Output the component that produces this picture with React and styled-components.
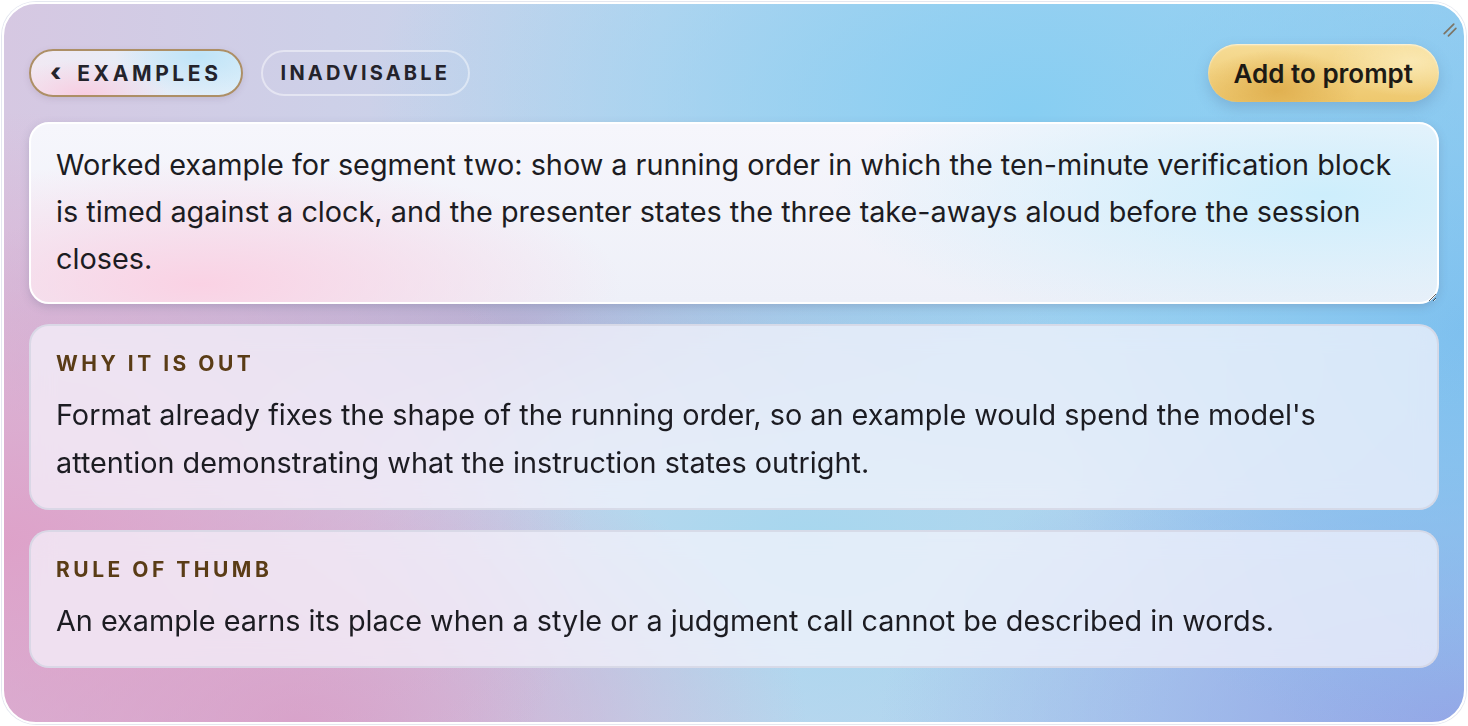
import React, { useState } from "react";
import styled, { createGlobalStyle } from "styled-components";

const GlobalStyle = createGlobalStyle`
  html, body {
    margin: 0;
    padding: 0;
    background: #fff;
  }
  body {
    font-family: Inter, "Noto Sans", "Liberation Sans", sans-serif;
    color: #1c1c22;
  }
  #root {
    padding: 2px;
    box-sizing: border-box;
    height: 726px;
  }
`;

const Panel = styled.div`
  position: relative;
  box-sizing: border-box;
  height: 100%;
  border: 2px solid #fff;
  border-radius: 34px;
  padding: 40px 25px 0 25px;
  display: flex;
  flex-direction: column;
  gap: 20px;
  overflow: hidden;
  box-shadow: 0 0 0 1px rgba(210, 215, 230, 0.6);
  background:
    radial-gradient(ellipse 40% 60% at 0% 75%, rgba(222, 160, 200, 0.95), rgba(222, 160, 200, 0) 100%),
    radial-gradient(ellipse 35% 40% at 20% 100%, rgba(214, 160, 200, 0.9), rgba(214, 160, 200, 0) 100%),
    radial-gradient(ellipse 45% 55% at 70% 15%, rgba(135, 206, 242, 1), rgba(135, 206, 242, 0) 100%),
    radial-gradient(ellipse 30% 60% at 100% 45%, rgba(125, 190, 238, 1), rgba(125, 190, 238, 0) 100%),
    radial-gradient(ellipse 40% 45% at 100% 100%, rgba(150, 165, 230, 1), rgba(150, 165, 230, 0) 100%),
    radial-gradient(ellipse 30% 40% at 55% 75%, rgba(165, 215, 238, 0.9), rgba(165, 215, 238, 0) 100%),
    radial-gradient(ellipse 40% 25% at 35% 44%, rgba(180, 160, 200, 0.7), rgba(180, 160, 200, 0) 100%),
    linear-gradient(90deg, #d6c8e2 0%, #c4d8ee 45%, #9fd0f0 100%);
`;

const Grip = styled.svg`
  position: absolute;
  top: 18px;
  right: 6px;
  width: 17px;
  height: 17px;
`;

const Header = styled.div`
  display: flex;
  align-items: center;
  gap: 18px;
  height: 58px;
`;

const Pill = styled.button`
  display: flex;
  align-items: center;
  gap: 16px;
  height: ${({ $active }) => ($active ? "48px" : "46px")};
  box-sizing: border-box;
  padding: ${({ $active }) => ($active ? "0 19px 0 19px" : "0 18px")};
  border-radius: 999px;
  border: ${({ $active }) =>
    $active ? "2px solid #ad8f66" : "2px solid rgba(255, 255, 255, 0.45)"};
  background: ${({ $active }) =>
    $active
      ? "radial-gradient(ellipse 40% 80% at 25% 100%, rgba(248, 205, 225, 1), rgba(248, 205, 225, 0) 100%), radial-gradient(ellipse 40% 90% at 80% 10%, rgba(190, 228, 248, 1), rgba(190, 228, 248, 0) 100%), linear-gradient(90deg, #f1e9f3, #dceefa)"
      : "transparent"};
  box-shadow: ${({ $active }) =>
    $active ? "0 2px 6px rgba(120, 100, 130, 0.18)" : "none"};
  font-family: Inter, "Noto Sans", sans-serif;
  font-size: ${({ $active }) => ($active ? "21px" : "20px")};
  font-weight: 700;
  letter-spacing: ${({ $active }) => ($active ? "3.6px" : "3.2px")};
  color: #24232b;
  cursor: pointer;
`;

const Chevron = styled.span`
  font-size: 25px;
  font-weight: 800;
  letter-spacing: 0;
  margin-top: -3px;
`;

const Spacer = styled.div`
  flex: 1;
`;

const AddButton = styled.button`
  height: 58px;
  padding: 0 26px;
  border: none;
  border-radius: 999px;
  font-family: Inter, "Noto Sans", sans-serif;
  font-size: 26px;
  font-weight: 600;
  color: #1d1a14;
  cursor: pointer;
  background:
    radial-gradient(ellipse 35% 70% at 30% 80%, rgba(224, 176, 80, 1), rgba(224, 176, 80, 0) 100%),
    radial-gradient(ellipse 35% 60% at 88% 30%, rgba(250, 232, 178, 1), rgba(250, 232, 178, 0) 100%),
    linear-gradient(180deg, #f6dc96 0%, #eec86e 100%);
  box-shadow: 0 6px 14px rgba(80, 110, 150, 0.28), inset 0 1px 2px rgba(255, 255, 255, 0.7);
`;

const Editor = styled.textarea`
  display: block;
  box-sizing: border-box;
  width: 100%;
  height: 182px;
  flex-shrink: 0;
  margin: 0;
  padding: 17px 24px 20px 25px;
  border: 2px solid #fff;
  border-radius: 20px;
  resize: vertical;
  outline: none;
  font-family: Inter, "Noto Sans", sans-serif;
  font-size: 28.8px;
  line-height: 47px;
  color: #1c1c22;
  background:
    radial-gradient(ellipse 30% 70% at 12% 90%, rgba(250, 210, 228, 1), rgba(250, 210, 228, 0) 100%),
    radial-gradient(ellipse 35% 80% at 92% 40%, rgba(205, 238, 252, 1), rgba(205, 238, 252, 0) 100%),
    linear-gradient(180deg, #f6f6fc 0%, #eef0f8 100%);
  box-shadow: 0 3px 8px rgba(90, 100, 130, 0.25);
`;

const Note = styled.section`
  box-sizing: border-box;
  padding: 25px 25px 21px 25px;
  border-radius: 20px;
  border: 2px solid rgba(210, 212, 225, 0.75);
  background: rgba(246, 244, 252, 0.74);
  backdrop-filter: blur(12px);
`;

const Label = styled.h3`
  margin: 0 0 15px 0;
  font-size: 21px;
  line-height: 25px;
  font-weight: 700;
  letter-spacing: 3.5px;
  text-transform: uppercase;
  color: #5a3c16;
`;

const Body = styled.p`
  margin: 0;
  font-size: 28.8px;
  line-height: 48px;
  color: #1c1c22;
`;

const notes = [
  {
    label: "Why it is out",
    text: "Format already fixes the shape of the running order, so an example would spend the model's attention demonstrating what the instruction states outright.",
  },
  {
    label: "Rule of thumb",
    text: "An example earns its place when a style or a judgment call cannot be described in words.",
  },
];

const App = () => {
  const [draft, setDraft] = useState(
    "Worked example for segment two: show a running order in which the ten-minute verification block is timed against a clock, and the presenter states the three take-aways aloud before the session closes."
  );

  return (
    <>
      <GlobalStyle />
      <Panel>
        <Grip viewBox="0 0 16 16">
          <path d="M3 11 L12 2 M7 13 L14 6" stroke="#7d7566" strokeWidth="1.6" strokeLinecap="round" />
        </Grip>
        <Header>
          <Pill $active>
            <Chevron>‹</Chevron>
            EXAMPLES
          </Pill>
          <Pill>INADVISABLE</Pill>
          <Spacer />
          <AddButton>Add to prompt</AddButton>
        </Header>
        <Editor value={draft} onChange={(e) => setDraft(e.target.value)} spellCheck={false} />
        {notes.map((n) => (
          <Note key={n.label}>
            <Label>{n.label}</Label>
            <Body>{n.text}</Body>
          </Note>
        ))}
      </Panel>
    </>
  );
};

export default App;
